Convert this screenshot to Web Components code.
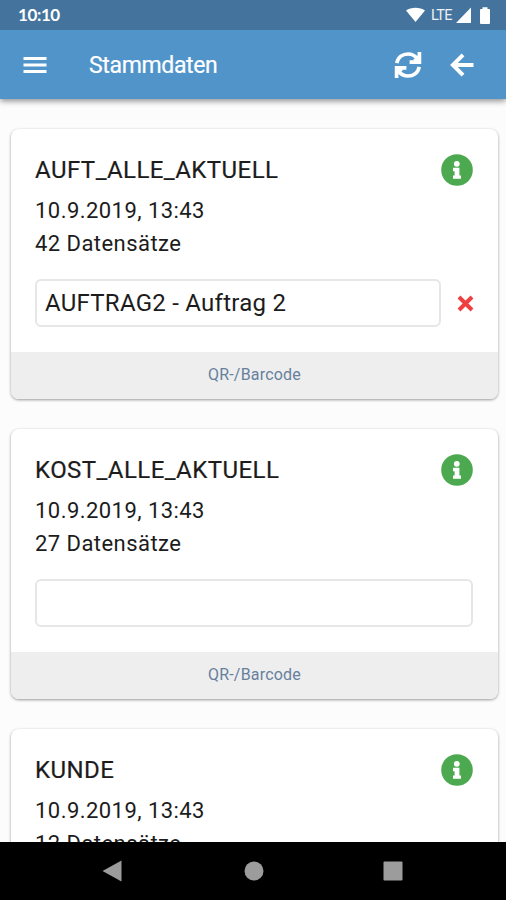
<!DOCTYPE html>
<html lang="de">
<head>
    <meta charset="UTF-8">
    <meta name="viewport" content="width=device-width, initial-scale=1.0">
    <title>Stammdaten</title>
    <style>
        body {
            margin: 0;
            height: 900px;
            overflow: hidden;
            background-color: #fcfcfc;
            font-family: Roboto, "Liberation Sans", sans-serif;
            color: #1c1c1c;
        }
    </style>
</head>
<body>
    <app-screen>
        <status-bar slot="top" time="10:10" network="LTE"></status-bar>
        <app-toolbar slot="top">Stammdaten</app-toolbar>
        <data-card name="AUFT_ALLE_AKTUELL" date="10.9.2019, 13:43" count="42" value="AUFTRAG2 - Auftrag 2">QR-/Barcode</data-card>
        <data-card name="KOST_ALLE_AKTUELL" date="10.9.2019, 13:43" count="27">QR-/Barcode</data-card>
        <data-card name="KUNDE" date="10.9.2019, 13:43" count="12"></data-card>
        <nav-bar slot="bottom"></nav-bar>
    </app-screen>

    <script>
        class AppScreen extends HTMLElement {
            constructor() {
                super();
                this.attachShadow({ mode: 'open' }).innerHTML = `
                    <style>
                        :host {
                            display: flex;
                            flex-direction: column;
                            height: 900px;
                        }
                        header {
                            flex: none;
                            z-index: 1;
                            box-shadow: 0 2px 6px rgba(0,0,0,0.45);
                        }
                        main {
                            flex: 1;
                            min-height: 0;
                            overflow: hidden;
                            display: flex;
                            flex-direction: column;
                            gap: 30px;
                            padding: 30px 8px 0 11px;
                        }
                    </style>
                    <header><slot name="top"></slot></header>
                    <main><slot></slot></main>
                    <slot name="bottom"></slot>
                `;
            }
        }

        class StatusBar extends HTMLElement {
            connectedCallback() {
                this.attachShadow({ mode: 'open' }).innerHTML = `
                    <style>
                        :host {
                            display: flex;
                            align-items: center;
                            height: 30px;
                            padding: 0 16px 0 18px;
                            background-color: #44749e;
                            color: #fff;
                        }
                        .time {
                            flex: 1;
                            padding-bottom: 2px;
                            font-family: Lato, Roboto, sans-serif;
                            font-size: 17px;
                            font-weight: 700;
                            letter-spacing: -0.4px;
                        }
                        .network {
                            font-size: 14.5px;
                            letter-spacing: -0.6px;
                            margin: 0 4px 0 6px;
                            opacity: 0.9;
                        }
                        svg { display: block; fill: #fff; }
                        .battery { margin-left: 9px; }
                    </style>
                    <span class="time">${this.getAttribute('time')}</span>
                    <svg width="19" height="16" viewBox="0 0 19 16"><path d="M9.5 15 0 3.5C5-0.2 14-0.2 19 3.5z"/></svg>
                    <span class="network">${this.getAttribute('network')}</span>
                    <svg width="15" height="16" viewBox="0 0 15 16"><path d="M15 0.5V16H0z"/></svg>
                    <svg class="battery" width="10" height="17" viewBox="0 0 10 17"><path d="M2.5 0.3h5v1.7h1.5a1 1 0 0 1 1 1v13a1 1 0 0 1-1 1H1a1 1 0 0 1-1-1V3a1 1 0 0 1 1-1h1.5z"/></svg>
                `;
            }
        }

        class AppToolbar extends HTMLElement {
            constructor() {
                super();
                this.attachShadow({ mode: 'open' }).innerHTML = `
                    <style>
                        :host {
                            display: flex;
                            align-items: center;
                            height: 69px;
                            padding: 0 32px 0 23px;
                            background-color: #5094ca;
                            color: #fff;
                        }
                        .title {
                            flex: 1;
                            margin-left: 42px;
                            padding-top: 1px;
                            font-size: 23px;
                            letter-spacing: -0.35px;
                            -webkit-text-stroke: 0.2px #fff;
                        }
                        svg { display: block; fill: none; stroke: #fff; }
                        .back { margin-left: 28px; }
                    </style>
                    <svg width="24" height="18" viewBox="0 0 24 18" stroke-width="3"><path d="M0.5 2.5h23M0.5 9h23M0.5 15.5h23"/></svg>
                    <span class="title"><slot></slot></span>
                    <svg width="28" height="28" viewBox="0 0 28 28" stroke-width="3.7">
                        <path d="M2.8 12.2C4 6 8.8 3 14 3c4.2 0 7.2 1.8 9.8 5.2M25.4 1v10.2H15.6M20.5 10l4-4"/>
                        <path d="M25.2 15.8C24 22 19.2 25 14 25c-4.2 0-7.2-1.8-9.8-5.2M2.6 27v-10.2H12.4M7.5 18l-4 4"/>
                    </svg>
                    <svg class="back" width="24" height="24" viewBox="0 0 24 24" stroke-width="4"><path d="M13 1.8 2.9 12 13 22.2M3 12h20.5"/></svg>
                `;
            }
        }

        class InfoIcon extends HTMLElement {
            constructor() {
                super();
                this.attachShadow({ mode: 'open' }).innerHTML = `
                    <style>
                        :host { display: block; width: 32px; height: 32px; }
                        svg { display: block; }
                    </style>
                    <svg width="32" height="32" viewBox="0 0 32 32">
                        <circle cx="16" cy="16" r="15.8" fill="#4ca950"/>
                        <circle cx="15.8" cy="9.8" r="2.9" fill="#fff"/>
                        <path fill="#fff" d="M12 13.8h6.4v7.6H20v3.4h-8v-3.4h1.6v-4.2H12z"/>
                    </svg>
                `;
            }
        }

        class DataCard extends HTMLElement {
            connectedCallback() {
                const value = this.getAttribute('value') || '';
                // the clear button is only there for a filled field
                const clear = value ? `
                    <svg class="clear" width="17" height="17" viewBox="0 0 17 17"><path d="M2 2l13 13M15 2 2 15"/></svg>
                ` : '';

                this.attachShadow({ mode: 'open' }).innerHTML = `
                    <style>
                        :host {
                            display: flex;
                            flex-direction: column;
                            flex: none;
                            height: 270px;
                            border-radius: 8px;
                            overflow: hidden;
                            background-color: #fff;
                            box-shadow: 0 1px 3px rgba(0,0,0,0.4);
                        }
                        .content {
                            flex: 1;
                            padding: 25px 25px 0 24px;
                        }
                        .head {
                            display: flex;
                            justify-content: space-between;
                            align-items: center;
                            height: 32px;
                            margin-bottom: 8px;
                        }
                        .name {
                            font-size: 24px;
                            letter-spacing: 0.45px;
                            -webkit-text-stroke: 0.2px #1c1c1c;
                        }
                        .line {
                            font-size: 22px;
                            line-height: 33px;
                            letter-spacing: 0.45px;
                        }
                        .field {
                            display: flex;
                            align-items: center;
                            margin-top: 19px;
                        }
                        .input {
                            flex: 1;
                            box-sizing: border-box;
                            height: 48px;
                            padding: 0 8px;
                            border: 2px solid #e6e6e6;
                            border-radius: 6px;
                            font-size: 24px;
                            line-height: 45px;
                            letter-spacing: 0.25px;
                        }
                        .clear {
                            margin: 0 -1px 0 16px;
                            fill: none;
                            stroke: #ee4040;
                            stroke-width: 4;
                        }
                        footer {
                            height: 47px;
                            line-height: 45px;
                            background-color: #eeeeee;
                            color: #66809d;
                            font-size: 16px;
                            letter-spacing: 0.2px;
                            text-align: center;
                        }
                    </style>
                    <div class="content">
                        <div class="head">
                            <span class="name">${this.getAttribute('name')}</span>
                            <info-icon></info-icon>
                        </div>
                        <div class="line">${this.getAttribute('date')}</div>
                        <div class="line">${this.getAttribute('count')} Datensätze</div>
                        <div class="field">
                            <div class="input">${value}</div>
                            ${clear}
                        </div>
                    </div>
                    <footer><slot></slot></footer>
                `;
            }
        }

        class NavBar extends HTMLElement {
            constructor() {
                super();
                this.attachShadow({ mode: 'open' }).innerHTML = `
                    <style>
                        :host {
                            display: flex;
                            flex: none;
                            z-index: 1;
                            justify-content: space-between;
                            align-items: center;
                            box-sizing: border-box;
                            height: 58px;
                            padding: 0 103px 0 102px;
                            background-color: #000;
                        }
                        svg { display: block; fill: #9c9c9c; }
                        .home { margin-left: 2px; }
                    </style>
                    <svg width="20" height="22" viewBox="0 0 20 22"><path d="M19.5 0.5v21L0.5 11z"/></svg>
                    <svg class="home" width="20" height="20" viewBox="0 0 20 20"><circle cx="10" cy="10" r="9.5"/></svg>
                    <svg width="20" height="20" viewBox="0 0 20 20"><rect x="0.5" y="0.5" width="19" height="19" rx="1"/></svg>
                `;
            }
        }

        customElements.define('app-screen', AppScreen);
        customElements.define('status-bar', StatusBar);
        customElements.define('app-toolbar', AppToolbar);
        customElements.define('info-icon', InfoIcon);
        customElements.define('data-card', DataCard);
        customElements.define('nav-bar', NavBar);
    </script>
</body>
</html>
